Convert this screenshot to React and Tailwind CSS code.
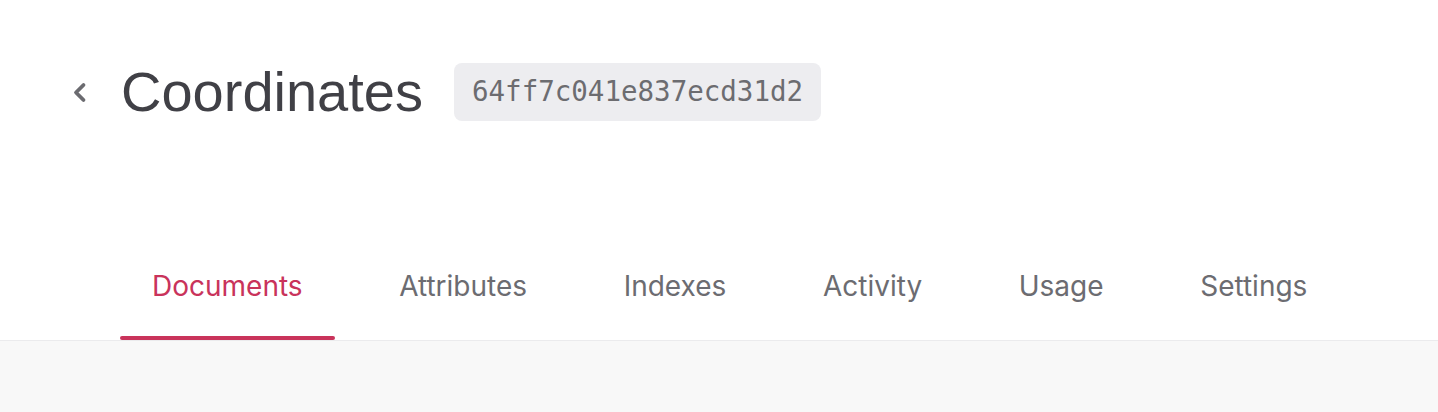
const tabs = ['Documents', 'Attributes', 'Indexes', 'Activity', 'Usage', 'Settings']

export default function App() {
  return (
    <div className="min-h-[412px] flex flex-col bg-white" style={{ fontFamily: 'Inter, sans-serif' }}>
      {/* Header */}
      <div className="flex items-center h-[58px] mt-[63px] pl-[68px]">
        <button className="flex items-center justify-center w-[22px] h-[24px] text-[#6b6b70]">
          <svg width="22" height="24" viewBox="0 0 22 24" fill="none">
            <path d="M15.5 5 L8 12.5 L15.5 20" stroke="currentColor" strokeWidth="3.8" strokeLinecap="round" strokeLinejoin="round" />
          </svg>
        </button>
        <h1
          className="ml-[31px] text-[56px] leading-none text-[#404046]"
          style={{ fontFamily: '"Liberation Sans", Arial, sans-serif' }}
        >
          Coordinates
        </h1>
        <div
          className="ml-[31px] h-[58px] flex items-center px-[18px] rounded-lg bg-[#ededf0] text-[27.5px] text-[#6c6c70]"
          style={{ fontFamily: '"DejaVu Sans Mono", monospace' }}
        >
          64ff7c041e837ecd31d2
        </div>
      </div>

      {/* Tabs */}
      <div className="mt-[149px] flex gap-[32.6px] pl-[120px] border-b border-[#ebebed]">
        {tabs.map((t, i) => (
          <div key={t} className="flex flex-col">
            <span
              className={`px-[32px] text-[28px] leading-[32px] ${
                i === 0 ? 'text-[#c9335b]' : 'text-[#6c6c71]'
              }`}
            >
              {t}
            </span>
            <div className={`mt-[34px] h-[4px] rounded-full ${i === 0 ? 'bg-[#c9335b]' : 'bg-transparent'}`} />
          </div>
        ))}
      </div>

      <div className="flex-1 bg-[#f8f8f8]" />
    </div>
  )
}
